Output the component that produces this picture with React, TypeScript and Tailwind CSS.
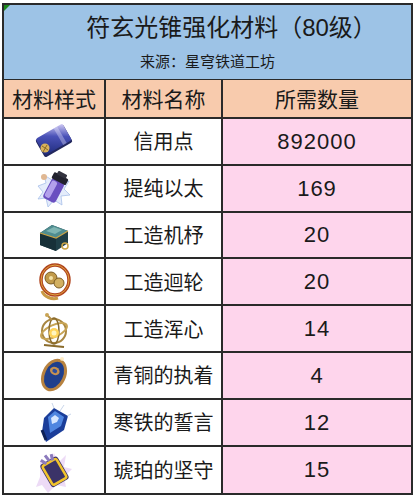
import React from 'react'

// 材料アイコン（ゲーム内画像の簡易再現）
function CreditIcon() {
  return (
    <svg width="46" height="40" viewBox="0 0 46 40">
      <defs>
        <linearGradient id="cr" x1="0" y1="1" x2="1" y2="0">
          <stop offset="0" stopColor="#1e2a7a" />
          <stop offset="0.6" stopColor="#4a52b8" />
          <stop offset="1" stopColor="#d6cff7" />
        </linearGradient>
      </defs>
      <g transform="rotate(-30 23 20)">
        <rect x="7" y="10" width="32" height="20" rx="2" fill="#23285e" />
        <rect x="8" y="9" width="31" height="19" rx="2" fill="url(#cr)" />
        <rect x="29" y="9" width="4" height="19" fill="#eeeaff" opacity="0.35" />
      </g>
      <circle cx="14" cy="27" r="4.5" fill="#d9b25a" />
      <path d="M11 25l6 4M12 31l4-7" stroke="#8a6a28" strokeWidth="1" />
    </svg>
  )
}

function AetherIcon() {
  return (
    <svg width="40" height="44" viewBox="0 0 40 44">
      <path d="M4 20l8-3-2-8 8 5 6-7 2 9 9-1-5 8 6 6-9 1 1 9-8-5-6 7-2-9-8 1 5-7z" fill="#e4ecfb" stroke="#a8c0ea" strokeWidth="0.8" />
      <g transform="rotate(28 21 22)">
        <rect x="14" y="14" width="14" height="22" rx="3" fill="#6a4fc0" />
        <rect x="15" y="16" width="6" height="18" rx="2" fill="#c6b4f5" opacity="0.8" />
        <rect x="13" y="8" width="16" height="7" rx="1.5" fill="#22222e" />
        <rect x="16" y="5" width="10" height="4" rx="1" fill="#33333f" />
      </g>
      <circle cx="10" cy="11" r="3" fill="#e0b893" />
    </svg>
  )
}

function MechanismIcon() {
  return (
    <svg width="40" height="40" viewBox="0 0 40 40">
      <path d="M6 18l12-8 16 6v12l-12 8-16-6z" fill="#1f3f47" />
      <path d="M6 18l12-8 16 6-12 7z" fill="#4f8d90" />
      <path d="M12 16l8-4 8 3-7 4z" fill="#7fb5b2" />
      <path d="M6 18l16 5v13l-16-6z" fill="#173038" />
      <path d="M6 18l16 5 12-7" stroke="#c9a447" strokeWidth="1.2" fill="none" />
      <circle cx="31" cy="31" r="3" fill="none" stroke="#c9a447" strokeWidth="1.5" />
    </svg>
  )
}

function GearIcon() {
  return (
    <svg width="40" height="42" viewBox="0 0 40 42">
      <ellipse cx="21" cy="19" rx="14" ry="15" fill="none" stroke="#b0441f" strokeWidth="3.5" />
      <ellipse cx="21" cy="19" rx="14" ry="15" fill="none" stroke="#e0a53f" strokeWidth="1" />
      <circle cx="17" cy="17" r="6" fill="#c19a4a" stroke="#7a5a22" strokeWidth="1" />
      <circle cx="25" cy="22" r="5" fill="#d2b061" stroke="#7a5a22" strokeWidth="1" />
      <circle cx="17" cy="17" r="2" fill="#f3e0a4" />
      <path d="M8 30c2 6 10 9 16 7" stroke="#c99a44" strokeWidth="3" fill="none" />
    </svg>
  )
}

function SphereIcon() {
  return (
    <svg width="40" height="44" viewBox="0 0 40 44">
      <circle cx="20" cy="24" r="12" fill="none" stroke="#a88640" strokeWidth="2" />
      <ellipse cx="20" cy="24" rx="14" ry="6" fill="none" stroke="#c7a455" strokeWidth="2" transform="rotate(-25 20 24)" />
      <ellipse cx="20" cy="24" rx="5" ry="13" fill="none" stroke="#8a6b2c" strokeWidth="1.5" />
      <circle cx="20" cy="26" r="5" fill="#ffd45a" />
      <circle cx="20" cy="26" r="2.5" fill="#fff5c0" />
      <path d="M14 9l4 4" stroke="#b38f46" strokeWidth="2" />
      <circle cx="13" cy="8" r="2" fill="#c9a455" />
      <path d="M10 38l20 2" stroke="#8a6b2c" strokeWidth="2" />
    </svg>
  )
}

function BronzeIcon() {
  return (
    <svg width="40" height="42" viewBox="0 0 40 42">
      <g transform="rotate(25 20 21)">
        <ellipse cx="20" cy="21" rx="12" ry="17" fill="#b7823f" />
        <ellipse cx="20" cy="21" rx="9" ry="14" fill="#1f3f8c" />
        <ellipse cx="19" cy="17" rx="5" ry="4" fill="#c59150" />
        <ellipse cx="19" cy="17" rx="2.5" ry="2" fill="#2c4fa0" />
      </g>
      <circle cx="28" cy="5" r="2" fill="#ffe7b8" opacity="0.8" />
    </svg>
  )
}

function IceIcon() {
  return (
    <svg width="40" height="44" viewBox="0 0 40 44">
      <path d="M10 18l10-10 14 8-4 14-18 12-4-10z" fill="#1b3e9a" />
      <path d="M14 17l7-6 9 6-3 9-11 7z" fill="#4f86e0" />
      <path d="M17 18l4-3 4 3-2 4-5 2z" fill="#d6e6ff" />
      <path d="M20 8l-2-5M26 11l4-6M33 16l4-2" stroke="#c9d6ea" strokeWidth="1" />
      <path d="M8 30l4 10" stroke="#0e2157" strokeWidth="3" />
    </svg>
  )
}

function AmberIcon() {
  return (
    <svg width="40" height="46" viewBox="0 0 40 46">
      <path d="M6 14l8 6 6-14 4 10 8-8-2 12 8 2-8 8 2 10-10-2-8 8-6-8-6 2 4-10z" fill="#e8d2f4" opacity="0.8" />
      <g transform="rotate(-30 20 24)">
        <rect x="10" y="12" width="20" height="26" rx="3" fill="#3b3368" />
        <rect x="12" y="14" width="16" height="22" rx="2" fill="none" stroke="#f2c42c" strokeWidth="2.5" />
        <path d="M14 8l3 6M20 6l1 7M26 8l-2 6" stroke="#8c7bbd" strokeWidth="3" />
      </g>
    </svg>
  )
}

const materials = [
  { icon: CreditIcon, name: "信用点", count: "892000" },
  { icon: AetherIcon, name: "提纯以太", count: "169" },
  { icon: MechanismIcon, name: "工造机杼", count: "20" },
  { icon: GearIcon, name: "工造迴轮", count: "20" },
  { icon: SphereIcon, name: "工造浑心", count: "14" },
  { icon: BronzeIcon, name: "青铜的执着", count: "4" },
  { icon: IceIcon, name: "寒铁的誓言", count: "12" },
  { icon: AmberIcon, name: "琥珀的坚守", count: "15" },
]

const font = "font-['Noto_Sans_CJK_SC','Noto_Sans',sans-serif]"

export default function App() {
  return (
    <div className={`w-[416px] h-[496px] bg-white pt-[3px] pl-[2px] ${font} text-[#1a1a1a]`}>
      <div className="relative w-[411px] border-2 border-[#2a2a2a]">
        {/* セルコメントの印 */}
        <div className="absolute top-0 left-0 w-0 h-0 border-t-[6px] border-r-[6px] border-t-[#1c8a1c] border-r-transparent" />

        {/* タイトル部分 */}
        <div className="h-[75px] bg-[#9dc3e6] flex flex-col items-center border-b border-[#2a2a2a]">
          <div className="mt-[4px] text-[24px] leading-[34px] pl-[48px]">
            符玄光锥强化材料（<span className="font-['Liberation_Sans',sans-serif]">80</span>级）
          </div>
          <div className="mt-[6px] text-[15px] leading-[20px]">来源：星穹铁道工坊</div>
        </div>

        {/* 見出し行 */}
        <div className="grid grid-cols-[102px_117px_1fr] h-[39px] bg-[#f8cbad] text-[21px] border-b-2 border-[#2a2a2a]">
          <div className="flex items-center justify-center border-r-2 border-[#2a2a2a]">材料样式</div>
          <div className="flex items-center justify-center border-r-2 border-[#2a2a2a]">材料名称</div>
          <div className="flex items-center justify-center">所需数量</div>
        </div>

        {materials.map((m, idx) => {
          const Icon = m.icon
          return (
            <div
              key={idx}
              className={`grid grid-cols-[102px_117px_1fr] h-[46.8px] ${idx < materials.length - 1 ? 'border-b-2 border-[#2a2a2a]' : ''}`}
            >
              <div className="flex items-center justify-center border-r-2 border-[#2a2a2a] bg-white">
                <Icon />
              </div>
              <div className="flex items-center justify-center border-r-2 border-[#2a2a2a] bg-white text-[20px]">{m.name}</div>
              <div className="flex items-center justify-center bg-[#fed5ec] text-[22px] tracking-[1px] font-['Liberation_Sans',sans-serif]">{m.count}</div>
            </div>
          )
        })}
      </div>
    </div>
  )
}
